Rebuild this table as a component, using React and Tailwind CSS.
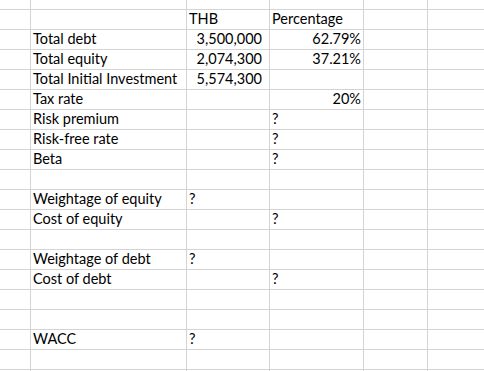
const rows = [
  ["", "THB", "Percentage"],
  ["Total debt", "3,500,000", "62.79%"],
  ["Total equity", "2,074,300", "37.21%"],
  ["Total Initial Investment", "5,574,300", ""],
  ["Tax rate", "", "20%"],
  ["Risk premium", "", "?"],
  ["Risk-free rate", "", "?"],
  ["Beta", "", "?"],
  ["", "", ""],
  ["Weightage of equity", "?", ""],
  ["Cost of equity", "", "?"],
  ["", "", ""],
  ["Weightage of debt", "?", ""],
  ["Cost of debt", "", "?"],
  ["", "", ""],
  ["", "", ""],
  ["WACC", "?", ""],
  ["", "", ""],
  ["", "", ""],
];

// right-aligned values are numbers, everything else sits left
const isNum = (v) => /^[\d,.]+%?$/.test(v);

function Cell({ value, width, pr }) {
  const right = isNum(value);
  return (
    <div
      className={`${width} h-full shrink-0 border-r border-[#d4d4d4] flex items-end pb-[2px] ${right ? "justify-end" : "justify-start pl-[2px]"} ${pr}`}
    >
      <span className="leading-[16px] whitespace-nowrap">{value}</span>
    </div>
  );
}

export default function App() {
  return (
    <div
      className="w-[484px] h-[371px] overflow-hidden bg-white text-black text-[14.5px]"
      style={{ fontFamily: "Lato, 'Open Sans', sans-serif" }}
    >
      {/* partial top row */}
      <div className="h-[10px] flex border-b border-[#d4d4d4]">
        <div className="w-[31px] shrink-0 border-r border-[#d4d4d4]" />
        <div className="w-[156px] shrink-0 border-r border-[#d4d4d4]" />
        <div className="w-[83px] shrink-0 border-r border-[#d4d4d4]" />
        <div className="w-[94px] shrink-0 border-r border-[#d4d4d4]" />
        <div className="w-[64px] shrink-0 border-r border-[#d4d4d4]" />
        <div className="flex-1" />
      </div>
      {rows.map((r, i) => (
        <div key={i} className="h-[20px] flex border-b border-[#d4d4d4]">
          <div className="w-[31px] shrink-0 border-r border-[#d4d4d4]" />
          <Cell value={r[0]} width="w-[156px]" pr="" />
          <Cell value={r[1]} width="w-[83px]" pr="pr-[7px]" />
          <Cell value={r[2]} width="w-[94px]" pr="pr-[2px]" />
          <div className="w-[64px] shrink-0 border-r border-[#d4d4d4]" />
          <div className="flex-1" />
        </div>
      ))}
    </div>
  );
}
